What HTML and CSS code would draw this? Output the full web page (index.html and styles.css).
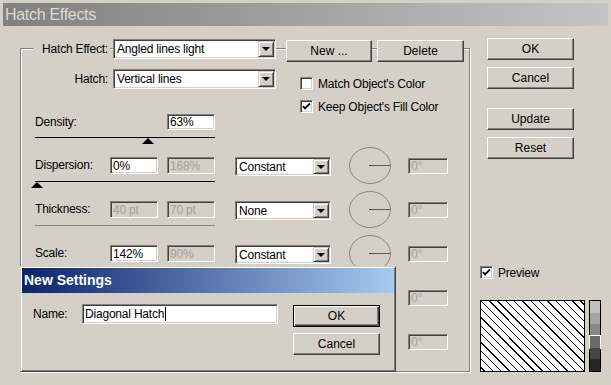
FILE: index.html
```html
<!DOCTYPE html>
<html lang="en">
<head>
  <meta charset="UTF-8">
  <title>Hatch Effects</title>
  <link rel="stylesheet" href="styles.css">
</head>
<body>

  <div class="titlebar">Hatch Effects</div>

  <div class="main">
    <div class="group">

      <div class="head">
        <span class="head-label">Hatch Effect:</span>
        <div class="field select wide"><span class="val">Angled lines light</span><span class="arrow"></span></div>
        <button class="btn new">New ...</button>
        <button class="btn delete">Delete</button>
      </div>

      <div class="top">
        <div class="hatch">
          <span class="hatch-label">Hatch:</span>
          <div class="field select wide"><span class="val">Vertical lines</span><span class="arrow"></span></div>
        </div>
        <div class="checks">
          <div class="check"><span class="box"></span>Match Object's Color</div>
          <div class="check"><span class="box"><svg width="9" height="9" viewBox="0 0 9 9"><path d="M1 4 L3 6.5 L8 1.5" fill="none" stroke="#000" stroke-width="1.8"/></svg></span>Keep Object's Fill Color</div>
        </div>
      </div>

      <div class="density">
        <span class="label">Density:</span>
        <div class="field num">63%</div>
      </div>
      <div class="track" style="--v: .63"><span class="thumb"></span></div>

      <div class="row">
        <span class="label">Dispersion:</span>
        <div class="field num">0%</div>
        <div class="field num off">168%</div>
        <div class="field select short"><span class="val">Constant</span><span class="arrow"></span></div>
        <svg class="dial" viewBox="0 0 42 37"><ellipse cx="21" cy="18.5" rx="20.5" ry="18" fill="none" stroke="#8a8780"/><line x1="21" y1="18.5" x2="41.5" y2="18.5" stroke="#5a5852"/><rect x="20" y="18" width="2" height="1" fill="#333"/></svg>
        <div class="field angle off">0°</div>
      </div>
      <div class="track" style="--v: 0"><span class="thumb"></span></div>

      <div class="row">
        <span class="label">Thickness:</span>
        <div class="field num off">40 pt</div>
        <div class="field num off">70 pt</div>
        <div class="field select short"><span class="val">None</span><span class="arrow"></span></div>
        <svg class="dial" viewBox="0 0 42 37"><ellipse cx="21" cy="18.5" rx="20.5" ry="18" fill="none" stroke="#8a8780"/><line x1="21" y1="18.5" x2="41.5" y2="18.5" stroke="#5a5852"/><rect x="20" y="18" width="2" height="1" fill="#333"/></svg>
        <div class="field angle off">0°</div>
      </div>
      <div class="track off"></div>

      <div class="row">
        <span class="label">Scale:</span>
        <div class="field num">142%</div>
        <div class="field num off">90%</div>
        <div class="field select short"><span class="val">Constant</span><span class="arrow"></span></div>
        <svg class="dial" viewBox="0 0 42 37"><ellipse cx="21" cy="18.5" rx="20.5" ry="18" fill="none" stroke="#8a8780"/><line x1="21" y1="18.5" x2="41.5" y2="18.5" stroke="#5a5852"/><rect x="20" y="18" width="2" height="1" fill="#333"/></svg>
        <div class="field angle off">0°</div>
      </div>
      <div class="track" style="--v: .5"><span class="thumb"></span></div>

      <div class="row">
        <span class="spacer"></span>
        <div class="field angle off">0°</div>
      </div>
      <div class="track off"></div>

      <div class="row">
        <span class="spacer"></span>
        <div class="field angle off">0°</div>
      </div>
    </div>

    <div class="side">
      <button class="btn">OK</button>
      <button class="btn cancel">Cancel</button>
      <button class="btn update">Update</button>
      <button class="btn reset">Reset</button>

      <div class="check preview"><span class="box"><svg width="9" height="9" viewBox="0 0 9 9"><path d="M1 4 L3 6.5 L8 1.5" fill="none" stroke="#000" stroke-width="1.8"/></svg></span>Preview</div>

      <div class="swatches">
        <svg class="swatch" width="105" height="72" viewBox="0 0 105 72">
          <rect x="0.5" y="0.5" width="104" height="71" fill="#fff" stroke="#000"/>
          <path d="M-66.4 0l72 72M-58.1 0l72 72M-49.8 0l72 72M-41.5 0l72 72M-33.2 0l72 72M-24.9 0l72 72M-16.6 0l72 72M-8.3 0l72 72M0 0l72 72M8.3 0l72 72M16.6 0l72 72M24.9 0l72 72M33.2 0l72 72M41.5 0l72 72M49.8 0l72 72M58.1 0l72 72M66.4 0l72 72M74.7 0l72 72M83 0l72 72M91.3 0l72 72M99.6 0l72 72" stroke="#000" shape-rendering="crispEdges" clip-path="inset(1px)"/>
        </svg>
        <div class="grays">
          <span class="g1"></span>
          <span class="g2"></span>
          <span class="g3"></span>
          <span class="g4 sel"></span>
          <span class="g5"></span>
          <span class="g6"></span>
        </div>
      </div>
    </div>
  </div>

  <!-- modal on top of the main dialog -->
  <div class="dialog">
    <div class="dlg-title">New Settings</div>
    <div class="dlg-body">
      <span class="name-label">Name:</span>
      <div class="field name">Diagonal Hatch<span class="caret"></span></div>
      <div class="dlg-buttons">
        <button class="btn default">OK</button>
        <button class="btn">Cancel</button>
      </div>
    </div>
  </div>

</body>
</html>
```

FILE: styles.css
```css
body {
  margin: 0;
  width: 611px;
  height: 385px;
  overflow: hidden;
  position: relative;
  background: #d4d0c8;
  font-family: "Liberation Sans", Arial, sans-serif;
  font-size: 12px;
  letter-spacing: -0.2px;
  color: #000;
}
.titlebar {
  margin: 3px 3px 0;
  height: 23px;
  line-height: 23px;
  padding-left: 2px;
  background: linear-gradient(to right, #808080, #c4c4c6);
  color: #dcdad4;
  font-size: 16px;
  letter-spacing: -0.3px;
}
.main {
  display: flex;
  margin-top: 12px;
  padding-left: 20px;
}
.group {
  box-sizing: border-box;
  width: 450px;
  height: 324px;
  margin-top: 10px;
  padding-left: 14px;
  border: 1px solid #808080;
  box-shadow: inset 1px 1px #fff, 1px 1px #fff;
}

/* controls */
.field {
  box-sizing: border-box;
  display: flex;
  align-items: center;
  padding: 0 2px;
  background: #fff;
  border: 1px solid;
  border-color: #808080 #fff #fff #808080;
  box-shadow: inset 1px 1px #404040, inset -1px -1px #d4d0c8;
  white-space: nowrap;
  overflow: hidden;
}
.field.off {
  background: #d4d0c8;
  color: #a3a09a;
}
.select {
  align-items: stretch;
  padding: 1px 1px 1px 3px;
}
.select .val {
  flex: 1;
  align-self: center;
}
.arrow {
  box-sizing: border-box;
  width: 16px;
  display: flex;
  align-items: center;
  justify-content: center;
  background: #d4d0c8;
  border: 1px solid;
  border-color: #d4d0c8 #404040 #404040 #d4d0c8;
  box-shadow: inset 1px 1px #fff, inset -1px -1px #808080;
}
.arrow::after {
  content: "";
  border-left: 4px solid transparent;
  border-right: 4px solid transparent;
  border-top: 4px solid #000;
}
.btn {
  box-sizing: border-box;
  width: 87px;
  height: 22px;
  padding: 0;
  font: inherit;
  color: #000;
  background: #d4d0c8;
  border: 1px solid;
  border-color: #fff #404040 #404040 #fff;
  box-shadow: inset -1px -1px #808080;
}
.btn.default {
  border-color: #000;
  box-shadow: inset 1px 1px #fff, inset -1px -1px #404040, inset -2px -2px #808080;
}
.check {
  display: flex;
  align-items: center;
  height: 15px;
}
.box {
  box-sizing: border-box;
  width: 13px;
  height: 13px;
  margin-right: 5px;
  display: flex;
  align-items: center;
  justify-content: center;
  background: #fff;
  border: 1px solid;
  border-color: #808080 #fff #fff #808080;
  box-shadow: inset 1px 1px #404040, inset -1px -1px #d4d0c8;
}

/* top of the group */
.head {
  display: flex;
  align-items: flex-start;
  height: 23px;
  margin-top: -10px;
}
.head-label {
  box-sizing: border-box;
  width: 77px;
  margin-left: -2px;
  padding-right: 2px;
  line-height: 20px;
  text-align: right;
  background: #d4d0c8;
}
.wide {
  width: 163px;
  height: 20px;
  margin-left: 3px;
}
.new {
  width: 86px;
  margin: 1px 0 0 10px;
}
.delete {
  margin: 1px 0 0 5px;
}
.top {
  display: flex;
  margin-top: 7px;
}
.hatch {
  display: flex;
  align-items: flex-start;
}
.hatch-label {
  box-sizing: border-box;
  width: 75px;
  padding-right: 2px;
  line-height: 20px;
  text-align: right;
}
.checks {
  display: flex;
  flex-direction: column;
  gap: 8px;
  margin-left: 24px;
  padding-top: 7px;
}

/* parameter rows */
.density {
  display: flex;
  align-items: flex-start;
  height: 23px;
}
.density .label {
  width: 132px;
  line-height: 16px;
}
.density .num {
  height: 16px;
}
.row {
  display: flex;
  align-items: flex-start;
  height: 24px;
}
.row .label {
  width: 75px;
  line-height: 17px;
}
.spacer {
  width: 373px;
}
.num {
  width: 48px;
  height: 17px;
}
.num + .num {
  margin-left: 9px;
}
.short {
  width: 96px;
  height: 19px;
  margin-left: 20px;
}
.dial {
  width: 42px;
  height: 37px;
  margin: -10px 0 0 18px;
}
.angle {
  width: 40px;
  height: 16px;
  margin: 1px 0 0 17px;
}
.spacer + .angle {
  margin-left: 0;
}
.track {
  box-sizing: border-box;
  position: relative;
  width: 180px;
  height: 20px;
  border-top: 1px solid #000;
}
.track.off {
  border-top-color: #8a8780;
}
.thumb {
  position: absolute;
  top: 0;
  left: calc(var(--v) * 176px - 4px);
  border-left: 6px solid transparent;
  border-right: 6px solid transparent;
  border-bottom: 6px solid #000;
}

/* right column */
.side {
  display: flex;
  flex-direction: column;
  align-items: flex-start;
  margin-left: 10px;
}
.side > .btn {
  margin-left: 7px;
}
.cancel {
  margin-top: 7px;
}
.update {
  margin-top: 19px;
}
.reset {
  margin-top: 7px;
}
.preview {
  margin-top: 106px;
}
.swatches {
  display: flex;
  margin-top: 20px;
}
.swatch {
  display: block;
}
.grays {
  box-sizing: border-box;
  display: flex;
  flex-direction: column;
  width: 12px;
  height: 72px;
  margin-left: 4px;
  border: 1px solid #000;
}
.grays span {
  flex: 1;
}
.g1 { background: #c0c0c0; }
.g2 { background: #a4a4a4; }
.g3 { background: #888888; }
.g4 { background: #6a6a6a; }
.g5 { background: #454545; }
.g6 { background: #262626; }
.grays .sel {
  box-shadow: 0 0 0 1px #fff;
}

/* New Settings dialog */
.dialog {
  box-sizing: border-box;
  position: absolute;
  left: 20px;
  top: 266px;
  width: 376px;
  height: 106px;
  padding: 1px;
  background: #d4d0c8;
  border: 1px solid;
  border-color: #d4d0c8 #404040 #404040 #d4d0c8;
  box-shadow: inset 1px 1px #fff, inset -1px -1px #808080;
}
.dlg-title {
  height: 25px;
  line-height: 25px;
  padding-left: 2px;
  background: linear-gradient(to right, #0a246a, #a6caf0);
  color: #fff;
  font-size: 14px;
  font-weight: bold;
  letter-spacing: 0;
}
.dlg-body {
  display: flex;
  align-items: flex-start;
  padding: 11px 0 0 11px;
}
.name-label {
  width: 49px;
  line-height: 20px;
}
.name {
  width: 196px;
  height: 20px;
  padding-left: 2px;
}
.caret {
  width: 1px;
  height: 14px;
  margin-left: 1px;
  background: #000;
}
.dlg-buttons {
  display: flex;
  flex-direction: column;
  gap: 6px;
  margin: 1px 0 0 15px;
}
```
